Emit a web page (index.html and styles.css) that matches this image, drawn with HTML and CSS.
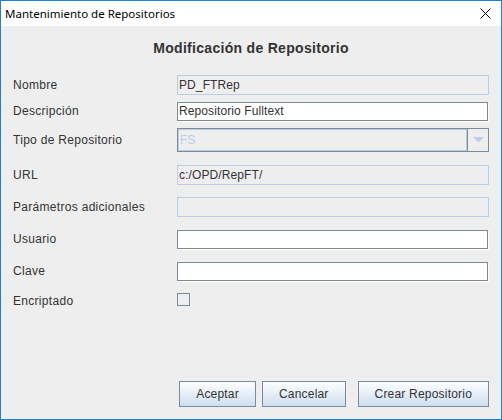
FILE: index.html
```html
<!DOCTYPE html>
<html lang="es">
<head>
<meta charset="utf-8">
<title>Mantenimiento de Repositorios</title>
<link rel="stylesheet" href="styles.css">
</head>
<body>
<div class="window">
  <div class="titlebar">
    <span class="title">Mantenimiento de Repositorios</span>
    <svg class="close" width="11" height="11" viewBox="0 0 11 11"><path d="M0.5 0.5 L10.5 10.5 M10.5 0.5 L0.5 10.5" stroke="#000" stroke-width="1" fill="none"/></svg>
  </div>
  <div class="content">
    <h1 class="heading">Modificación de Repositorio</h1>
    <div class="form">
      <div class="row">
        <label class="label">Nombre</label>
        <div class="field disabled">PD_FTRep</div>
      </div>
      <div class="row gap-6">
        <label class="label">Descripción</label>
        <div class="field enabled">Repositorio Fulltext</div>
      </div>
      <div class="row combo-row gap-7">
        <label class="label">Tipo de Repositorio</label>
        <div class="combo">
          <div class="combo-text">FS</div>
          <div class="combo-btn"><svg width="11" height="6" viewBox="0 0 11 6"><polygon points="0,0 11,0 5.5,5.5" fill="#b8cfe5"/></svg></div>
        </div>
      </div>
      <div class="row gap-13">
        <label class="label">URL</label>
        <div class="field disabled">c:/OPD/RepFT/</div>
      </div>
      <div class="row gap-12">
        <label class="label">Parámetros adicionales</label>
        <div class="field disabled"></div>
      </div>
      <div class="row gap-12">
        <label class="label">Usuario</label>
        <div class="field enabled"></div>
      </div>
      <div class="row gap-12">
        <label class="label">Clave</label>
        <div class="field enabled"></div>
      </div>
      <div class="row check-row gap-12">
        <label class="label check-label">Encriptado</label>
        <div class="checkbox"></div>
      </div>
    </div>
    <div class="buttons">
      <button class="btn">Aceptar</button>
      <button class="btn">Cancelar</button>
      <button class="btn btn-wide">Crear Repositorio</button>
    </div>
  </div>
</div>
</body>
</html>
```

FILE: styles.css
```css
* { box-sizing: border-box; }
html, body { margin: 0; padding: 0; background: #eeeeee; }

.window {
  width: 502px;
  height: 420px;
  border: 1px solid #1883d7;
  display: flex;
  flex-direction: column;
  font-family: "Liberation Sans", Arial, sans-serif;
  color: #333333;
}

.titlebar {
  height: 25px;
  background: #ffffff;
  display: flex;
  align-items: center;
  justify-content: space-between;
  padding: 0 10px 0 4px;
  flex: none;
}
.title {
  font-family: "Noto Sans", "Open Sans", sans-serif;
  font-size: 11.5px;
  color: #000000;
}
.close { display: block; }

.content {
  flex: 1;
  background: #eeeeee;
  display: flex;
  flex-direction: column;
  padding: 0 12px 12px 12px;
}

.heading {
  margin: 14px 0 0 0;
  font-size: 14px;
  line-height: 16px;
  font-weight: bold;
  letter-spacing: 0.3px;
  text-align: center;
  color: #333333;
}

.form {
  margin-top: 19px;
  display: flex;
  flex-direction: column;
}

.row {
  display: flex;
  align-items: center;
  height: 20px;
}
.combo-row { height: 24px; }
.check-row { height: 13px; }
.gap-6 { margin-top: 6px; }
.gap-7 { margin-top: 7px; }
.gap-12 { margin-top: 12px; }
.gap-13 { margin-top: 13px; }

.label {
  width: 164px;
  flex: none;
  font-size: 12px;
  letter-spacing: 0.3px;
  color: #333333;
}
.check-label { position: relative; top: 1px; }

.field {
  width: 312px;
  height: 20px;
  font-size: 12px;
  letter-spacing: 0.1px;
  line-height: 18px;
  padding-left: 1px;
  color: #333333;
}
.field.disabled {
  background: #eeeeee;
  border: 1px solid #b8cfe5;
}
.field.enabled {
  background: #ffffff;
  border: 1px solid #7a8a99;
  height: 19px;
  line-height: 17px;
  width: 311px;
  box-shadow: 1px 1px 0 #ffffff;
}

.combo {
  width: 312px;
  height: 24px;
  border: 1px solid #7a8a99;
  display: flex;
}
.combo-text {
  flex: 1;
  border: 1px solid #b8cfe5;
  font-size: 12px;
  line-height: 20px;
  padding-left: 1px;
  color: #b8cfe5;
}
.combo-btn {
  width: 21px;
  border-left: 1px solid #7a8a99;
  display: flex;
  align-items: center;
  justify-content: center;
}
.combo-btn svg { display: block; }

.checkbox {
  width: 13px;
  height: 13px;
  border: 1px solid #7a8a99;
  background: #eeeeee;
}

.buttons {
  margin-top: auto;
  display: flex;
  justify-content: flex-end;
  gap: 6px;
}
.btn {
  height: 26px;
  padding: 0 16px;
  border: 1px solid #7a8a99;
  border-radius: 0;
  background: linear-gradient(#fdfeff 0%, #eaf1f9 40%, #cfdeee 100%);
  font-family: "Liberation Sans", Arial, sans-serif;
  font-size: 12px;
  letter-spacing: 0.2px;
  color: #333333;
}
.btn-wide { margin-left: 6px; }
```
